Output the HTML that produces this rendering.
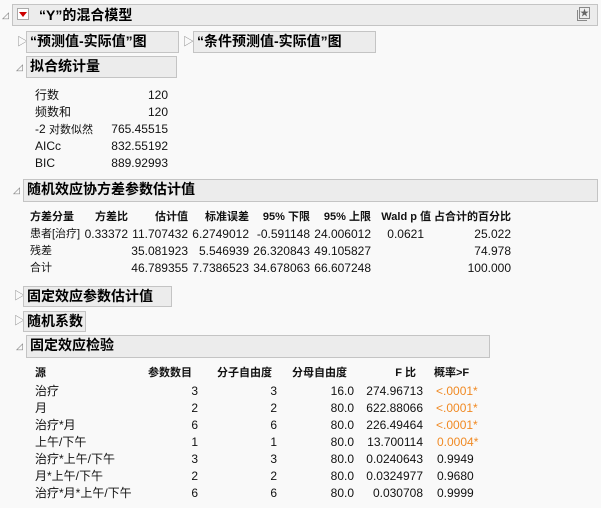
<!DOCTYPE html><html><head><meta charset="utf-8"><style>
body{margin:0;width:601px;height:508px;background:#f9f9f9;position:relative;overflow:hidden;font-family:"Liberation Sans","Noto Sans CJK SC",sans-serif;font-size:12px;color:#111}
.a{position:absolute;white-space:nowrap;line-height:14px}
.hd{position:absolute;background:#ececec;border:1px solid #c4c4c4;box-sizing:border-box;font-weight:bold;font-size:14px;line-height:19px;padding-left:3px;color:#000}
.r{text-align:right}
.b{font-weight:bold;font-size:11px}
.c{font-size:11px}
.o{color:#f08a24}
.tri{position:absolute;width:0;height:0}
.dn{position:absolute;font-size:9px;color:#777;line-height:10px}
</style></head><body>
<div class="hd" style="left:12px;top:4px;width:586px;height:22px;padding-left:26px;line-height:20px">“Y”的混合模型</div>
<div class="dn" style="left:2px;top:10px">◿</div>
<div style="position:absolute;left:17px;top:8px;width:12px;height:12px;border:1px solid #aaa;background:#fff;box-sizing:border-box"></div>
<div class="tri" style="left:19px;top:12px;border-left:4px solid transparent;border-right:4px solid transparent;border-top:5px solid #c00"></div>
<div style="position:absolute;left:579px;top:7px;width:9px;height:10px;border:1px solid #888;background:#eee"></div>
<div style="position:absolute;left:577px;top:10px;width:9px;height:10px;border-left:1px solid #888;border-bottom:1px solid #888"></div>
<div class="a" style="left:580px;top:6px;font-size:9px;color:#666">★</div>

<div class="a" style="left:17px;top:35px;font-size:11px;color:#888">▷</div>
<div class="hd" style="left:26px;top:31px;width:153px;height:22px">“预测值-实际值”图</div>
<div class="a" style="left:183px;top:35px;font-size:11px;color:#888">▷</div>
<div class="hd" style="left:193px;top:31px;width:183px;height:22px">“条件预测值-实际值”图</div>

<div class="dn" style="left:16px;top:62px">◿</div>
<div class="hd" style="left:26px;top:56px;width:151px;height:22px">拟合统计量</div>
<div class="a" style="left:35px;top:88px">行数</div><div class="a r" style="left:120px;width:48px;top:88px">120</div>
<div class="a" style="left:35px;top:105px">频数和</div><div class="a r" style="left:120px;width:48px;top:105px">120</div>
<div class="a" style="left:35px;top:122px"><span>-2 </span><span class="c">对数似然</span></div><div class="a r" style="left:100px;width:68px;top:122px">765.45515</div>
<div class="a" style="left:35px;top:139px">AICc</div><div class="a r" style="left:100px;width:68px;top:139px">832.55192</div>
<div class="a" style="left:35px;top:156px">BIC</div><div class="a r" style="left:100px;width:68px;top:156px">889.92993</div>
<div style="position:absolute;left:26px;top:179px;width:150px;height:1px;background:#ccc"></div>

<div class="dn" style="left:13px;top:185px">◿</div>
<div class="hd" style="left:23px;top:179px;width:575px;height:23px">随机效应协方差参数估计值</div>
<div class="a b" style="left:30px;top:210px">方差分量</div>
<div class="a b r" style="left:78px;width:50px;top:210px">方差比</div>
<div class="a b r" style="left:138px;width:50px;top:210px">估计值</div>
<div class="a b r" style="left:189px;width:60px;top:210px">标准误差</div>
<div class="a b r" style="left:250px;width:60px;top:210px">95% 下限</div>
<div class="a b r" style="left:311px;width:60px;top:210px">95% 上限</div>
<div class="a b r" style="left:370px;width:61px;top:210px">Wald p 值</div>
<div class="a b r" style="left:430px;width:81px;top:210px">占合计的百分比</div>

<div class="a c" style="left:30px;top:227px">患者[治疗]</div>
<div class="a r" style="left:78px;width:50px;top:227px">0.33372</div>
<div class="a r" style="left:128px;width:60px;top:227px">11.707432</div>
<div class="a r" style="left:189px;width:60px;top:227px">6.2749012</div>
<div class="a r" style="left:250px;width:60px;top:227px">-0.591148</div>
<div class="a r" style="left:311px;width:60px;top:227px">24.006012</div>
<div class="a r" style="left:380px;width:44px;top:227px">0.0621</div>
<div class="a r" style="left:450px;width:61px;top:227px">25.022</div>
<div class="a c" style="left:30px;top:244px">残差</div>
<div class="a r" style="left:128px;width:60px;top:244px">35.081923</div>
<div class="a r" style="left:189px;width:60px;top:244px">5.546939</div>
<div class="a r" style="left:250px;width:60px;top:244px">26.320843</div>
<div class="a r" style="left:311px;width:60px;top:244px">49.105827</div>
<div class="a r" style="left:450px;width:61px;top:244px">74.978</div>
<div class="a c" style="left:30px;top:261px">合计</div>
<div class="a r" style="left:128px;width:60px;top:261px">46.789355</div>
<div class="a r" style="left:189px;width:60px;top:261px">7.7386523</div>
<div class="a r" style="left:250px;width:60px;top:261px">34.678063</div>
<div class="a r" style="left:311px;width:60px;top:261px">66.607248</div>
<div class="a r" style="left:450px;width:61px;top:261px">100.000</div>

<div class="a" style="left:14px;top:289px;font-size:11px;color:#888">▷</div>
<div class="hd" style="left:23px;top:286px;width:149px;height:21px">固定效应参数估计值</div>
<div class="a" style="left:14px;top:314px;font-size:11px;color:#888">▷</div>
<div class="hd" style="left:23px;top:311px;width:63px;height:21px">随机系数</div>

<div class="dn" style="left:16px;top:341px">◿</div>
<div class="hd" style="left:26px;top:335px;width:464px;height:23px">固定效应检验</div>
<div class="a b" style="left:35px;top:366px">源</div>
<div class="a b r" style="left:132px;width:60px;top:366px">参数数目</div>
<div class="a b r" style="left:200px;width:72px;top:366px">分子自由度</div>
<div class="a b r" style="left:275px;width:72px;top:366px">分母自由度</div>
<div class="a b r" style="left:370px;width:46px;top:366px">F 比</div>
<div class="a b" style="left:434px;top:366px">概率&gt;F</div>

<div class="a" style="left:35px;top:384px">治疗</div><div class="a r" style="left:160px;width:38px;top:384px">3</div><div class="a r" style="left:240px;width:37px;top:384px">3</div><div class="a r" style="left:300px;width:54px;top:384px">16.0</div><div class="a r" style="left:355px;width:68px;top:384px">274.96713</div><div class="a o" style="left:436px;top:384px">&lt;.0001*</div>
<div class="a" style="left:35px;top:401px">月</div><div class="a r" style="left:160px;width:38px;top:401px">2</div><div class="a r" style="left:240px;width:37px;top:401px">2</div><div class="a r" style="left:300px;width:54px;top:401px">80.0</div><div class="a r" style="left:355px;width:68px;top:401px">622.88066</div><div class="a o" style="left:436px;top:401px">&lt;.0001*</div>
<div class="a" style="left:35px;top:418px">治疗*月</div><div class="a r" style="left:160px;width:38px;top:418px">6</div><div class="a r" style="left:240px;width:37px;top:418px">6</div><div class="a r" style="left:300px;width:54px;top:418px">80.0</div><div class="a r" style="left:355px;width:68px;top:418px">226.49464</div><div class="a o" style="left:436px;top:418px">&lt;.0001*</div>
<div class="a" style="left:35px;top:435px">上午/下午</div><div class="a r" style="left:160px;width:38px;top:435px">1</div><div class="a r" style="left:240px;width:37px;top:435px">1</div><div class="a r" style="left:300px;width:54px;top:435px">80.0</div><div class="a r" style="left:355px;width:68px;top:435px">13.700114</div><div class="a o" style="left:437px;top:435px">0.0004*</div>
<div class="a" style="left:35px;top:452px">治疗*上午/下午</div><div class="a r" style="left:160px;width:38px;top:452px">3</div><div class="a r" style="left:240px;width:37px;top:452px">3</div><div class="a r" style="left:300px;width:54px;top:452px">80.0</div><div class="a r" style="left:355px;width:68px;top:452px">0.0240643</div><div class="a" style="left:437px;top:452px">0.9949</div>
<div class="a" style="left:35px;top:469px">月*上午/下午</div><div class="a r" style="left:160px;width:38px;top:469px">2</div><div class="a r" style="left:240px;width:37px;top:469px">2</div><div class="a r" style="left:300px;width:54px;top:469px">80.0</div><div class="a r" style="left:355px;width:68px;top:469px">0.0324977</div><div class="a" style="left:437px;top:469px">0.9680</div>
<div class="a" style="left:35px;top:486px">治疗*月*上午/下午</div><div class="a r" style="left:160px;width:38px;top:486px">6</div><div class="a r" style="left:240px;width:37px;top:486px">6</div><div class="a r" style="left:300px;width:54px;top:486px">80.0</div><div class="a r" style="left:355px;width:68px;top:486px">0.030708</div><div class="a" style="left:437px;top:486px">0.9999</div>
</body></html>
